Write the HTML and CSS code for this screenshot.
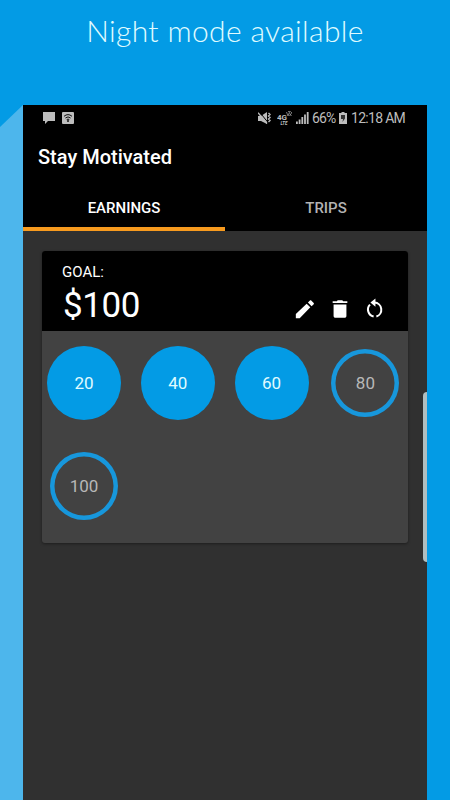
FILE: index.html
```html
<!DOCTYPE html>
<html lang="en">
<head>
  <meta charset="utf-8">
  <meta name="viewport" content="width=device-width, initial-scale=1">
  <title>Stay Motivated</title>
  <link rel="stylesheet" href="styles.css">
</head>
<body>
  <h1 id="headline">Night mode available</h1>
  <div id="stage">
    <div id="side"></div>
    <div id="phone">
      <div id="status">
        <svg class="chat" width="12" height="13" viewBox="0 0 12 13"><path d="M0 0h12v9H5l-3 3V9H0z"/></svg>
        <svg class="wifi" width="12" height="12" viewBox="0 0 12 12">
          <rect width="12" height="12" rx="1"/>
          <path class="dark" d="M2 4.3Q6 .9 10 4.3M3.4 6Q6 3.8 8.6 6M4.7 7.6Q6 6.6 7.3 7.6"/>
          <circle class="dot" cx="6" cy="9" r="1"/>
        </svg>
        <svg class="mute" width="14" height="13" viewBox="0 0 14 13">
          <path d="M0 4h3l6-4v12L3 9H0z"/>
          <path class="cut" d="M1.500 0L10 10.500"/>
          <path class="line" d="M0 .7L9 11.500M10.500 1L12 2.500 10.500 4 12 5.500 10.500 7 12 8.500 10.500 10"/>
        </svg>
        <svg class="lte" width="16" height="14" viewBox="0 0 16 14">
          <text x="0" y="8.500" class="gen">4G</text>
          <text x="3.500" y="13.500" class="sub">LTE</text>
          <path class="thin" d="M9.500 1l1.500 4 1.500-4M11 .5Q13.500-.5 15 2M12.500 2.500l2 2.500M14.500 2l-2 3"/>
        </svg>
        <svg class="signal" width="13" height="12" viewBox="0 0 13 12"><path d="M0 9.500h1.800V12H0zM2.700 7.500h1.800V12H2.700zM5.400 5h1.800v7H5.400zM8.100 2.500h1.800V12H8.100zM10.800 0h1.800v12h-1.800z"/></svg>
        <span class="percent">66%</span>
        <svg class="battery" width="8" height="12" viewBox="0 0 8 12">
          <path d="M2.500 0h3v1H8v11H0V1h2.500z"/>
          <path class="bolt" d="M2 3h4v3.500L3.500 10 4 7H2z"/>
        </svg>
        <span class="clock">12:18 AM</span>
      </div>
      <div id="toolbar">Stay Motivated</div>
      <div id="tabs">
        <div class="tab active">EARNINGS</div>
        <div class="tab">TRIPS</div>
      </div>
      <div id="card">
        <div class="card-head">
          <div>
            <div class="label">GOAL:</div>
            <div class="amount">$100</div>
          </div>
          <div class="actions">
            <svg viewBox="0 0 24 24"><path d="M2 17.500V22h4.200L17.810 10.200l-4-4L2 17.500zM21.500 6.800c.39-.39.39-1.020 0-1.410l-2.700-2.700c-.39-.39-1.020-.39-1.410 0l-2.200 2.200 4 4 2.310-2.090z"/></svg>
            <svg viewBox="0 0 24 24"><path d="M5 19.500c0 1.100.9 2 2 2h10c1.100 0 2-.9 2-2V7H5v12.500zM20 3.500h-4.500l-1-1h-5l-1 1H4v2h16v-2z"/></svg>
            <svg viewBox="0 0 24 24">
              <path d="M12.500 .5v9L7 5z"/>
              <path class="ring" d="M11.500 5A7.800 7.800 0 0 1 13.500 20.200M10.500 20.200A7.800 7.800 0 0 1 6.500 7.200"/>
            </svg>
          </div>
        </div>
        <div class="goals">
          <div class="goal done">20</div>
          <div class="goal done">40</div>
          <div class="goal done">60</div>
          <div class="goal">80</div>
          <div class="goal">100</div>
        </div>
      </div>
      <div id="edge"></div>
    </div>
  </div>
</body>
</html>
```
FILE: styles.css
```css
html, body {
  margin: 0;
  height: 100%;
}

body {
  background-color: #039be5;
  font-family: Roboto, sans-serif;
  overflow: hidden;
  display: flex;
  flex-direction: column;
}

#headline {
  margin: 0;
  height: 105px;
  box-sizing: border-box;
  padding-top: 13px;
  font-family: Lato, sans-serif;
  font-size: 30px;
  font-weight: 300;
  line-height: 35px;
  letter-spacing: 0.35px;
  text-align: center;
  white-space: nowrap;
  color: #e0fbff;
}

#stage {
  flex: 1;
  display: flex;
}

#side {
  width: 23px;
  background-color: #4db6ec;
  clip-path: polygon(100% 0, 100% 100%, 0 100%, 0 22px);
}

#phone {
  position: relative;
  width: 404px;
  background-color: #303030;
}

#status {
  display: flex;
  align-items: center;
  height: 26px;
  box-sizing: border-box;
  padding: 0 21px 0 20px;
  background-color: #000;
  color: #bdbdbd;
  font-size: 14px;
  white-space: nowrap;
}

#status svg {
  flex: none;
  fill: #bdbdbd;
}

#status .wifi {
  margin-left: 7px;
}

.wifi .dark {
  fill: none;
  stroke: #111;
}

.wifi .dot {
  fill: #111;
}

#status .mute {
  margin-left: auto;
}

.mute .line {
  fill: none;
  stroke: #bdbdbd;
  stroke-width: 1.4;
}

.mute .cut {
  stroke: #000;
}

#status .lte {
  margin-left: 5px;
}

.lte .gen {
  font-size: 8px;
  font-weight: 700;
}

.lte .sub {
  font-size: 4.5px;
  font-weight: 700;
  font-style: italic;
}

.lte .thin {
  fill: none;
  stroke: #999;
  stroke-width: 0.8;
}

#status .signal {
  margin-left: 3px;
}

.percent {
  margin-left: 3px;
  width: 24px;
  letter-spacing: -0.9px;
}

#status .battery {
  margin-left: 3px;
}

.battery .bolt {
  fill: #333;
}

.clock {
  margin-left: 4px;
  width: 55px;
  letter-spacing: -0.7px;
}

#toolbar {
  height: 54px;
  padding-left: 15px;
  background-color: #000;
  color: #fff;
  font-size: 20px;
  font-weight: 500;
  line-height: 52px;
}

#tabs {
  display: flex;
  height: 46px;
  background-color: #000;
}

.tab {
  flex: 1;
  box-sizing: border-box;
  color: #b3b3b3;
  font-size: 15px;
  font-weight: 500;
  line-height: 46px;
  text-align: center;
}

.tab.active {
  color: #fff;
  border-bottom: 4px solid #f79a1e;
}

#card {
  margin: 20px 19px 0;
  height: 292px;
  border-radius: 3px;
  background-color: #424242;
  box-shadow: 0 1px 3px rgba(0, 0, 0, 0.4);
  overflow: hidden;
}

.card-head {
  display: flex;
  justify-content: space-between;
  height: 80px;
  background-color: #000;
  color: #fff;
}

.label {
  padding: 11px 0 0 20px;
  font-size: 15px;
  line-height: 20px;
}

.amount {
  padding-left: 21px;
  font-size: 35px;
  line-height: 48px;
  letter-spacing: -0.4px;
}

.actions {
  display: flex;
  gap: 13px;
  padding: 47px 22px 0 0;
}

.actions svg {
  width: 22px;
  height: 22px;
  fill: #fff;
}

.actions .ring {
  fill: none;
  stroke: #fff;
  stroke-width: 2.2;
}

.goals {
  display: grid;
  grid-template-columns: repeat(4, 74px);
  grid-auto-rows: 74px;
  gap: 29.5px 19.8px;
  place-items: center;
  padding: 14.5px 5px;
}

/* ring is an inset shadow so it keeps its half pixel */
.goal {
  width: 68px;
  height: 68px;
  border-radius: 50%;
  box-shadow: inset 0 0 0 4.5px #1797dc;
  color: #b8b8b8;
  font-size: 17px;
  line-height: 69px;
  text-align: center;
}

.goal.done {
  width: 74px;
  height: 74px;
  box-shadow: none;
  background-color: #039be5;
  color: #e0fbff;
  line-height: 75px;
}

/* edge panel handle */
#edge {
  position: absolute;
  top: 287px;
  right: 0;
  width: 4px;
  height: 170px;
  border-radius: 4px 0 0 4px;
  background-color: #b0bec0;
}
```
